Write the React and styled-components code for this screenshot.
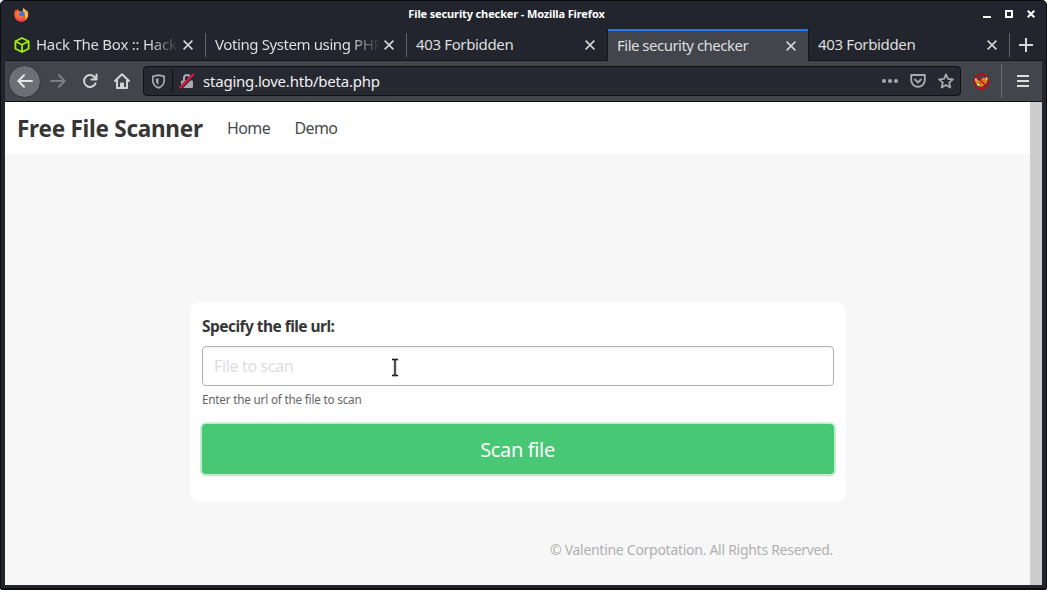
import React from "react";
import styled, { createGlobalStyle } from "styled-components";

const Global = createGlobalStyle`
  * { box-sizing: border-box; }
  html, body { margin: 0; background: #fff; overflow: hidden; }
  body { font-family: "Noto Sans", "Open Sans", sans-serif; }
  svg { display: block; flex: none; }
`;

const Window = styled.div`
  width: 1047px;
  height: 590px;
  display: flex;
  flex-direction: column;
  background: #23252e;
  border: 1px solid #0c0d11;
  border-bottom-width: 2px;
  border-radius: 5px 5px 2px 2px;
  padding: 0 4px 3px;
  overflow: hidden;
`;

const TitleBar = styled.header`
  height: 28px;
  flex: none;
  display: grid;
  grid-template-columns: 94px 1fr 110px;
  align-items: center;
  padding: 0 7px 2px 9px;
`;

const WindowTitle = styled.h1`
  margin: 0 20px 0 0;
  text-align: center;
  color: #fff;
  font-size: 11px;
  line-height: 16px;
  font-weight: 700;
  letter-spacing: -0.13px;
  white-space: nowrap;
`;

const WindowButtons = styled.div`
  display: flex;
  justify-content: flex-end;
  align-items: center;
  gap: 14px;
`;

const TabStrip = styled.nav`
  height: 32px;
  flex: none;
  display: flex;
  border-bottom: 1px solid #14151a;
`;

const Tab = styled.div`
  width: ${(p) => (p.$active ? 202 : 201)}px;
  height: ${(p) => (p.$active ? 32 : 31)}px;
  margin: ${(p) => (p.$active ? "0 0 0 -1px" : "0")};
  flex: none;
  display: flex;
  align-items: center;
  padding: ${(p) => (p.$active ? "0 12px 0 9px" : "0 13px 1px 9px")};
  color: #dededf;
  background: ${(p) => (p.$active ? "#42454c" : "transparent")};
  border: 0 solid #15161b;
  border-width: ${(p) => (p.$active ? "0 1px" : "0")};
  box-shadow: ${(p) => (p.$active ? "inset 0 2px 0 #2c72f5" : "none")};
  padding-top: 2px;
`;

const TabLabel = styled.span`
  flex: 1;
  min-width: 0;
  margin: 0 0 2px ${(p) => (p.$icon ? 6 : 0)}px;
  font-size: 15px;
  line-height: 22px;
  letter-spacing: ${(p) => p.$spacing}px;
  white-space: nowrap;
  overflow: hidden;
  mask-image: ${(p) => (p.$fade ? "linear-gradient(to right, #000 calc(100% - 34px), transparent calc(100% - 4px))" : "none")};
`;

const TabDivider = styled.i`
  width: 1px;
  height: 24px;
  margin: 4px 0 0 -1px;
  flex: none;
  background: #62646a;
`;

const NewTab = styled.div`
  display: flex;
  align-items: center;
  padding-left: 9px;
`;

const Toolbar = styled.div`
  height: 41px;
  flex: none;
  display: flex;
  align-items: center;
  padding: 0 13px 0 4px;
  background: #42454c;
  border-bottom: 1px solid #101116;
`;

const BackButton = styled.div`
  width: 33px;
  height: 33px;
  margin-left: -1px;
  flex: none;
  display: grid;
  place-items: center;
  border-radius: 50%;
  background: #6d6f75;
  border: 1px solid #303238;
`;

const NavIcons = styled.div`
  display: flex;
  gap: 16px;
  padding: 0 13px 0 9px;
`;

const AddressBar = styled.div`
  width: 818px;
  height: 30px;
  flex: none;
  display: flex;
  align-items: center;
  padding: 0 6px 0 7px;
  background: #262832;
  border: 1px solid #0f1015;
  border-radius: 4px;
`;

const Divider = styled.i`
  width: 1px;
  height: ${(p) => p.$height}px;
  margin: ${(p) => p.$margin};
  background: ${(p) => p.$color};
  flex: none;
`;

const Url = styled.span`
  flex: 1;
  padding-left: 8px;
  font-size: 15px;
  line-height: 22px;
  letter-spacing: -0.21px;
  color: #f0f0f1;
`;

const AddressActions = styled.div`
  display: flex;
  gap: 12px;
`;

const Extension = styled.div`
  margin-left: 12px;
`;

const Viewport = styled.div`
  flex: 1;
  min-height: 0;
  display: flex;
  background: #f7f7f7;
`;

const Page = styled.main`
  flex: 1;
  display: flex;
  flex-direction: column;
`;

const Scrollbar = styled.div`
  width: 12px;
  background: #cdcdcd;
`;

const Navbar = styled.nav`
  height: 52px;
  display: flex;
  align-items: center;
  padding: 0 12px 0 12px;
  background: #fff;
`;

const Brand = styled.strong`
  width: 210px;
  padding-top: 1px;
  font-size: 22.5px;
  line-height: 32px;
  color: #363636;
  white-space: nowrap;
  letter-spacing: -0.25px;
`;

const NavLink = styled.a`
  width: 67.5px;
  font-size: 16px;
  line-height: 24px;
  letter-spacing: -0.6px;
  color: #4a4a4a;
`;

const Content = styled.section`
  width: 656px;
  margin: 148px 0 0 185px;
`;

const Card = styled.form`
  height: 200px;
  padding: 12px;
  border-radius: 10px;
  background: #fff;
  display: flex;
  flex-direction: column;
`;

const Label = styled.label`
  font-size: 15.5px;
  line-height: 24px;
  font-weight: 700;
  letter-spacing: -0.54px;
  color: #363636;
`;

const Field = styled.div`
  position: relative;
  height: 40px;
  margin-top: 8px;
  padding: 0 11px;
  display: flex;
  align-items: center;
  border: 1px solid #b2b2b2;
  border-radius: 4px;
  box-shadow: inset 0 1px 2px rgba(10, 10, 10, 0.05);
  color: #dedede;
  font-size: 16px;
  line-height: 24px;
  letter-spacing: -0.35px;
`;

const TextCursor = styled.svg`
  position: absolute;
  left: 186px;
  top: 11px;
`;

const Help = styled.p`
  margin: 3px 0 0;
  font-size: 11.7px;
  line-height: 20px;
  letter-spacing: -0.19px;
  color: #666;
`;

const ScanButton = styled.button`
  height: 50px;
  flex: none;
  margin: 15px 0 0;
  padding: 2px 1px 0 0;
  border: 0;
  border-radius: 4px;
  background: #48c774;
  box-shadow: 0 0 0 2px rgba(72, 199, 116, 0.25), 0 1px 0 2px rgba(72, 199, 116, 0.12);
  color: #fff;
  font-family: inherit;
  font-size: 20px;
  line-height: 30px;
  letter-spacing: -0.35px;
`;

const Footer = styled.footer`
  margin-top: 38px;
  padding-right: 13px;
  text-align: right;
  font-size: 14px;
  line-height: 20px;
  letter-spacing: -0.28px;
  color: #b0b0b0;
`;

const Stroke = ({ size = 16, color = "#d5d5d6", width = 2, children }) => (
  <svg width={size} height={size} viewBox="0 0 16 16" fill="none" stroke={color} strokeWidth={width} strokeLinecap="round" strokeLinejoin="round">
    {children}
  </svg>
);

const CloseIcon = () => (
  <svg width="10" height="10" viewBox="0 0 10 10" fill="none" stroke="#d2d2d4" strokeWidth="1.7">
    <path d="M.6.6 9.4 9.4M9.4.6.6 9.4" />
  </svg>
);

const FirefoxIcon = () => (
  <svg width="15" height="15" viewBox="0 0 15 15">
    <path d="M1.300 2.800 2.600 3.600 3.400 1.400 4.800 3.400 7 5 11.500 4 13.500 3.800C14.600 6 14.500 8.500 13.200 11A6.800 6.800 0 0 1 .5 9C.2 7 .4 4.800 1.300 2.800Z" fill="#f6572f" />
    <path d="M9.500.5C10 2.300 12 2.900 13.400 4.500c1.500 3.400.8 7-2.600 8.700 1-1.800.9-4.100-.6-5.900C8.500 5.500 8.300 2.500 9.500.5Z" fill="#ffbd3b" />
    <circle cx="7.500" cy="7.300" r="3.200" fill="#3f72ee" />
    <path d="M1 6c1-2 2.700-2 4-1.300L7 6c-1 .5-2 .5-2.200 1.600.4 1.700 2.600 2.200 4.900 1.200-.5 2.200-2.400 3.200-4.500 2.900C2.900 11.300 1.500 8.700 1 6Z" fill="#ff7139" />
    <path d="M.5 8.500c.8 2.700 3.300 4.300 6.400 4.300 2.300 0 4.100-.5 5.500-1.800-1.200 2.200-3 3.400-5.300 3.400C3.600 14.400.8 12 .5 8.500Z" fill="#ee3a61" />
  </svg>
);

const CubeIcon = () => (
  <svg width="16" height="16" viewBox="0 0 16 16" fill="none" stroke="#9fef00" strokeWidth="1.8" strokeLinejoin="round">
    <path d="M8 1 14.600 4.300v7.400L8 15l-6.600-3.300V4.300L8 1ZM1.400 4.300 8 7.800l6.600-3.500M8 7.800V15" />
  </svg>
);

const LockIcon = () => (
  <svg width="16" height="16" viewBox="0 0 16 16">
    <path d="M5 8V5a3 3 0 0 1 6 0v3" fill="none" stroke="#a9aaae" strokeWidth="2" />
    <rect x="2" y="7.500" width="12" height="7.500" rx="1" fill="#a9aaae" />
    <path d="m1 15.500 14-14" stroke="#262832" strokeWidth="3.600" />
    <path d="m1.300 14.500 12.900-12.900" stroke="#f5124b" strokeWidth="2" strokeLinecap="round" />
  </svg>
);

const FoxyIcon = () => (
  <svg width="17" height="17" viewBox="0 0 17 17">
    <path d="M2.500 5.500 5 7.500 8 7l2-2.500 2 .8 2.500-1.300-.3 4.500-2.200 3.500-3.500 1.800-3.500-.8L2.800 10Z" fill="#e98514" />
    <path d="m2 4.500 1.500 1L3.800 8 2.300 8.200ZM13 3.500l1.800 1-.4 2.500L13 6ZM4 10.500l2.500 1-.8 1.500-1.400-1Z" fill="#f4e8df" />
    <path d="m6.500 9.500 1 1 1-1M10.500 7.500l1 1" fill="none" stroke="#75380f" strokeWidth="1" />
    <circle cx="8.500" cy="8.500" r="7.500" fill="none" stroke="#c6080d" strokeWidth="1.300" />
    <path d="m3.200 3.200 10.600 10.600" stroke="#c6080d" strokeWidth="1.400" />
  </svg>
);

const tabs = [
  { label: "Hack The Box :: Hack", icon: true, fade: true, spacing: -0.25 },
  { label: "Voting System using PHP", fade: true, spacing: -0.4 },
  { label: "403 Forbidden", spacing: -0.36 },
  { label: "File security checker", active: true, spacing: -0.51 },
  { label: "403 Forbidden", spacing: -0.36 },
];

export default function App() {
  return (
    <>
      <Global />
      <Window>
        <TitleBar>
          <FirefoxIcon />
          <WindowTitle>File security checker - Mozilla Firefox</WindowTitle>
          <WindowButtons>
            <svg width="8" height="8"><path d="M0 7h8" stroke="#fff" strokeWidth="2" /></svg>
            <svg width="8" height="8"><path d="M1 1h6v6H1z" fill="none" stroke="#fff" strokeWidth="2" /></svg>
            <svg width="8" height="8"><path d="m.7.7 6.600 6.600m0-6.600L.7 7.300" stroke="#fff" strokeWidth="2" /></svg>
          </WindowButtons>
        </TitleBar>
        <TabStrip>
          {tabs.map((tab, i) => (
            <React.Fragment key={i}>
              <Tab $active={tab.active}>
                {tab.icon && <CubeIcon />}
                <TabLabel $icon={tab.icon} $fade={tab.fade} $spacing={tab.spacing}>{tab.label}</TabLabel>
                <CloseIcon />
              </Tab>
              {(i < 2 || i === 4) && <TabDivider />}
            </React.Fragment>
          ))}
          <NewTab>
            <svg width="14" height="14"><path d="M7 0v14M0 7h14" stroke="#d8d8da" strokeWidth="2" /></svg>
          </NewTab>
        </TabStrip>
        <Toolbar>
          <BackButton>
            <Stroke color="#e5e5e6"><path d="M15 8H1.500M7 2.300 1.300 8 7 13.700" /></Stroke>
          </BackButton>
          <NavIcons>
            <Stroke color="#7c7e83"><path d="M1 8h13.500M9 2.300 14.700 8 9 13.700" /></Stroke>
            <Stroke><path d="M13.500 10.500A6 6 0 1 1 13 4.600M14.500 1.500v5h-5" /></Stroke>
            <Stroke><path d="m1 8 7-6.700L15 8M3 7.500V15h10V7.500M7 14.500v-4h2v4" /></Stroke>
          </NavIcons>
          <AddressBar>
            <Stroke size={15} color="#a9aaae"><path d="M2 2.500 8 1.200l6 1.300v5c0 3.500-2.800 6-6 7.300-3.200-1.300-6-3.800-6-7.300Z" strokeWidth="1.800" /><path d="M8 4.400v7.200C6.300 10.600 5.200 9.200 5.200 7.500V5Z" fill="#a9aaae" stroke="none" /></Stroke>
            <Divider $height={22} $margin="0 6px 0 6px" $color="#101116" />
            <LockIcon />
            <Url>staging.love.htb/beta.php</Url>
            <AddressActions>
              <svg width="16" height="16" fill="#a9aaae"><circle cx="2" cy="8" r="2" /><circle cx="8" cy="8" r="2" /><circle cx="14" cy="8" r="2" /></svg>
              <Stroke color="#a9aaae"><path d="M1.200 2h13.600v5a6.800 6.800 0 0 1-13.600 0ZM5 6.500l3 3 3-3" strokeWidth="1.900" /></Stroke>
              <Stroke color="#a9aaae"><path d="m8 1.300 2 4.500 4.900.5-3.700 3.300 1.100 4.900L8 12l-4.300 2.500 1.100-4.900-3.700-3.300 4.900-.5Z" strokeWidth="1.800" /></Stroke>
            </AddressActions>
          </AddressBar>
          <Extension><FoxyIcon /></Extension>
          <Divider $height={34} $margin="0 15px 0 11px" $color="#696b70" />
          <svg width="12" height="14"><path d="M0 2h12M0 7h12M0 12h12" stroke="#dedee0" strokeWidth="2" /></svg>
        </Toolbar>
        <Viewport>
          <Page>
            <Navbar>
              <Brand>Free File Scanner</Brand>
              <NavLink>Home</NavLink>
              <NavLink>Demo</NavLink>
            </Navbar>
            <Content>
              <Card>
                <Label>Specify the file url:</Label>
                <Field>
                  File to scan
                  <TextCursor width="12" height="19" viewBox="0 0 12 19" fill="none">
                    <path d="M3 1.500h6M3 17.500h6M6 2v15" stroke="#b9b9b9" strokeWidth="3" />
                    <path d="M3 1.500h2l1 1 1-1h2M3 17.500h2l1-1 1 1h2M6 2v15" stroke="#111" strokeWidth="1.200" />
                  </TextCursor>
                </Field>
                <Help>Enter the url of the file to scan</Help>
                <ScanButton type="button">Scan file</ScanButton>
              </Card>
              <Footer>© Valentine Corpotation. All Rights Reserved.</Footer>
            </Content>
          </Page>
          <Scrollbar />
        </Viewport>
      </Window>
    </>
  );
}
